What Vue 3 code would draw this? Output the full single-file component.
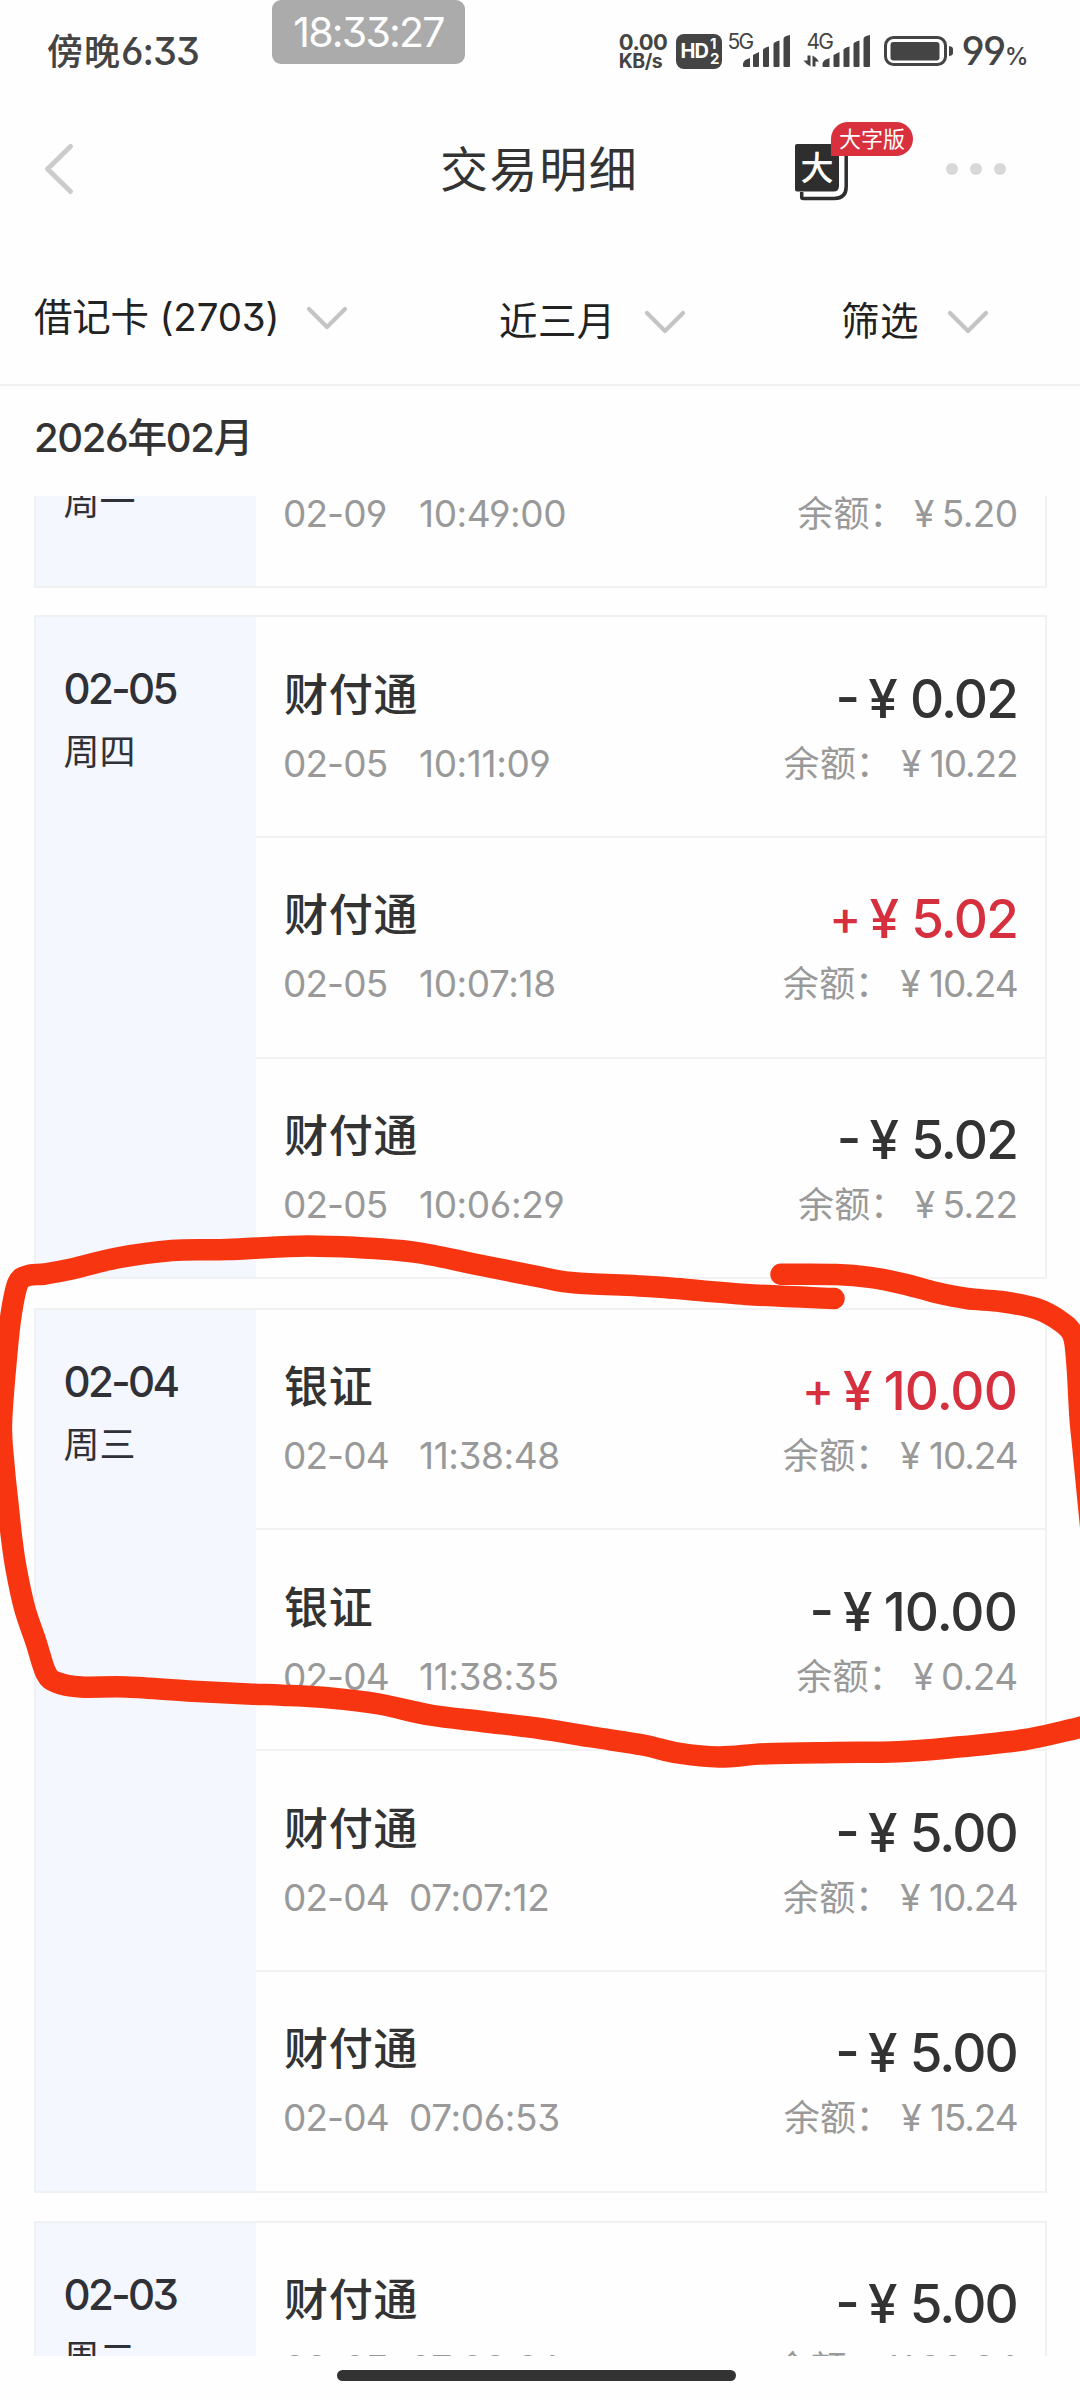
<script setup>
// The first card is scrolled so that only its last text line is on screen.
const cards = [
  {
    id: 'c0209',
    week: '周一',
    rows: [{ day: '02-09', time: '10:49:00', balance: '5.20' }],
  },
  {
    id: 'c0205',
    date: '02-05',
    week: '周四',
    rows: [
      { name: '财付通', day: '02-05', time: '10:11:09', sign: '-', amount: '0.02', balance: '10.22' },
      { name: '财付通', day: '02-05', time: '10:07:18', sign: '+', amount: '5.02', balance: '10.24' },
      { name: '财付通', day: '02-05', time: '10:06:29', sign: '-', amount: '5.02', balance: '5.22' },
    ],
  },
  {
    id: 'c0204',
    date: '02-04',
    week: '周三',
    rows: [
      { name: '银证', day: '02-04', time: '11:38:48', sign: '+', amount: '10.00', balance: '10.24' },
      { name: '银证', day: '02-04', time: '11:38:35', sign: '-', amount: '10.00', balance: '0.24' },
      { name: '财付通', day: '02-04', time: '07:07:12', sign: '-', amount: '5.00', balance: '10.24' },
      { name: '财付通', day: '02-04', time: '07:06:53', sign: '-', amount: '5.00', balance: '15.24' },
    ],
  },
  {
    id: 'c0203',
    date: '02-03',
    week: '周二',
    rows: [{ name: '财付通', day: '02-03', time: '07:08:26', sign: '-', amount: '5.00', balance: '20.24' }],
  },
]

const filters = [
  { label: '借记卡 (2703)', cls: 'account' },
  { label: '近三月', cls: 'period' },
  { label: '筛选', cls: 'more' },
]

const markerLeft = [
  [834, 1298.6], [746, 1294.4], [657, 1287], [574, 1282.8], [540, 1277], [482, 1265.5], [420, 1253],
  [375, 1248.5], [330, 1246.4], [289, 1246.4], [227, 1249.6], [172, 1250.5], [117, 1258], [69, 1269.6],
  [45, 1274], [28, 1275.6], [18, 1283], [11.5, 1312], [7, 1351], [1.5, 1423], [4, 1466], [8, 1505],
  [11.5, 1537], [16, 1568], [24.6, 1608], [36, 1642], [46, 1673], [57, 1682.5], [81, 1687], [127, 1687],
  [193, 1691.2], [248, 1694], [282, 1695.2], [330, 1698], [379, 1704], [430, 1715], [482, 1721.5],
  [540, 1728.5], [592, 1737], [643, 1745], [678, 1753], [719, 1757], [767, 1753.7], [836, 1752.5],
  [898, 1751.8], [953, 1747.5], [1022, 1740], [1067, 1730.5], [1100, 1722],
]
const markerRight = [
  [781, 1274.3], [836, 1274.5], [870, 1277.4], [905, 1284.2], [936, 1292.5], [967, 1298.5], [1001, 1301.5],
  [1036, 1308.5], [1060, 1321], [1073, 1335], [1077, 1364], [1080, 1417], [1083, 1448], [1091, 1530],
]

function smooth(p) {
  let d = `M${p[0]}`
  for (let i = 0; i < p.length - 1; i++) {
    const a = p[i - 1] || p[i]
    const b = p[i]
    const c = p[i + 1]
    const e = p[i + 2] || c
    d += `C${b[0] + (c[0] - a[0]) / 6},${b[1] + (c[1] - a[1]) / 6} ${c[0] - (e[0] - b[0]) / 6},${c[1] - (e[1] - b[1]) / 6} ${c[0]},${c[1]}`
  }
  return d
}
</script>

<template>
  <div class="screen">
    <header class="status">
      <span class="clock"><span class="clock-cn">傍晚</span>6:33</span>
      <div class="indicators">
        <div class="speed"><span class="rate">0.00</span><span class="unit">KB/s</span></div>
        <div class="hd">
          <span>HD</span>
          <span class="sims"><i>1</i><i>2</i></span>
        </div>
        <div class="signal first">
          <span class="net">5G</span>
          <svg width="64" height="36" viewBox="0 0 64 36">
            <g fill="#444">
              <path d="M16 33v-2q0-4 7-6v9h-6q-1 0-1-1z" />
              <path d="M26 22l6-3v14q0 1-1 1h-4q-1 0-1-1z" />
              <path d="M36 17q0-2 6-3.500v19.500q0 1-1 1h-4q-1 0-1-1z" />
              <path d="M46.500 11q0-2 6-3.500v25.500q0 1-1 1h-4q-1 0-1-1z" />
              <path d="M56.500 6q0-3 6.500-4v31q0 1-1 1h-4.500q-1 0-1-1z" />
            </g>
          </svg>
        </div>
        <div class="signal second">
          <span class="net">4G</span>
          <svg width="67" height="36" viewBox="0 0 67 36">
            <g fill="#444">
              <path d="M4.500 22.500h3v11q-4-2-7-6h4z" />
              <path d="M9.500 22.500q4 2 6.500 6h-3.500v5h-3z" />
              <path d="M19.500 33v-2q0-4 7-6v9h-6q-1 0-1-1z" />
              <path d="M30.500 22l6-3v14q0 1-1 1h-4q-1 0-1-1z" />
              <path d="M40.500 17q0-2 6-3.500v19.500q0 1-1 1h-4q-1 0-1-1z" />
              <path d="M50.500 11q0-2 6-3.500v25.500q0 1-1 1h-4q-1 0-1-1z" />
              <path d="M60.500 6q0-3 6.500-4v31q0 1-1 1h-4.500q-1 0-1-1z" />
            </g>
          </svg>
        </div>
        <svg class="battery" width="70" height="32" viewBox="0 0 70 32">
          <rect x="1.500" y="2.500" width="60" height="27" rx="8" fill="none" stroke="#444" stroke-width="3" />
          <rect x="6.500" y="7" width="49" height="18.500" rx="3" fill="#444" />
          <path d="M65 11q4 .5 4 3v4q0 2.500-4 3z" fill="#444" />
        </svg>
        <span class="percent">99<small>%</small></span>
      </div>
      <div class="stamp">18:33:27</div>
    </header>

    <nav class="titlebar">
      <svg class="back" width="32" height="56" viewBox="0 0 32 56">
        <path d="M27.500 5.500L4.500 28l23 22.500" fill="none" stroke="#ccc" stroke-width="5" stroke-linecap="round" stroke-linejoin="round" />
      </svg>
      <h1>交易明细</h1>
      <div class="bigtext">
        <svg width="54" height="58" viewBox="0 0 54 58">
          <path d="M6.700 49v5.200q0 1.300 1.500 1.300h31q12 0 12-12V10" fill="none" stroke="#2e2e2e" stroke-width="3.500" />
          <path d="M2 1h42v42q0 5.500-5.500 5.500H2q-2 0-2-2V3q0-2 2-2z" fill="#2e2e2e" />
        </svg>
        <span class="glyph">大</span>
        <span class="tag">大字版</span>
      </div>
      <div class="dots"><i></i><i></i><i></i></div>
    </nav>

    <section class="filters">
      <div v-for="f in filters" :key="f.cls" class="filter" :class="f.cls">
        <span>{{ f.label }}</span>
        <svg width="42" height="26" viewBox="0 0 42 26">
          <path d="M3 3l18 18L39 3" fill="none" stroke="#c4c4c4" stroke-width="4.200" stroke-linecap="round" stroke-linejoin="round" />
        </svg>
      </div>
    </section>

    <h2 class="month">2026年02月</h2>

    <main class="list">
      <article v-for="c in cards" :key="c.id" class="card">
        <aside>
          <div class="date">{{ c.date }}</div>
          <div class="week">{{ c.week }}</div>
        </aside>
        <ul>
          <li v-for="r in c.rows" :key="r.time">
            <div>
              <div class="name">{{ r.name }}</div>
              <div class="when" :class="{ one: r.time[0] === '1' }">
                <span class="day">{{ r.day }}</span><span>{{ r.time }}</span>
              </div>
            </div>
            <div class="money">
              <div class="amount" :class="{ income: r.sign === '+', one: r.amount && r.amount[0] === '1' }">
                <template v-if="r.amount">
                  <span class="sign">{{ r.sign }}</span><span class="yen">¥</span><span>{{ r.amount }}</span>
                </template>
              </div>
              <div class="balance" :class="{ one: r.balance[0] === '1' }">
                <span class="label">余额<span class="colon">：</span></span><span class="yen">¥</span><span>{{ r.balance }}</span>
              </div>
            </div>
          </li>
        </ul>
      </article>
    </main>

    <footer class="home"><i></i></footer>

    <svg class="marker" width="1080" height="2400" viewBox="0 0 1080 2400">
      <g fill="none" stroke="#f73510" stroke-width="21.500" stroke-linecap="round" stroke-linejoin="round">
        <path :d="smooth(markerLeft)" />
        <path :d="smooth(markerRight)" />
      </g>
    </svg>
  </div>
</template>

<style>
html,
body {
  margin: 0;
  background: #fefefe;
}
</style>

<style scoped>
.screen {
  position: relative;
  display: flex;
  flex-direction: column;
  width: 1080px;
  height: 2400px;
  overflow: hidden;
  background: #fefefe;
  color: #333;
  font-family: Inter, 'Noto Sans CJK SC', sans-serif;
  font-feature-settings: 'cv03', 'cv04', 'cv09', 'calt' 0;
  white-space: nowrap;
}
h1,
h2,
ul {
  margin: 0;
  padding: 0;
  font-weight: 400;
}
i {
  font-style: normal;
}
svg {
  display: block;
}

.status {
  position: relative;
  display: flex;
  align-items: center;
  justify-content: space-between;
  height: 102px;
  box-sizing: border-box;
  padding: 0 53px 0 47px;
  color: #444;
}
.clock {
  font-size: 38px;
  line-height: 60px;
  font-weight: 500;
  letter-spacing: -1px;
}
.clock-cn {
  font-size: 36px;
  letter-spacing: 1px;
}
.stamp {
  position: absolute;
  left: 272px;
  top: 0;
  width: 193px;
  height: 64px;
  border-radius: 9px;
  background: #ababab;
  color: #fff;
  font-size: 41px;
  line-height: 65px;
  letter-spacing: -1.8px;
  text-align: center;
}
.indicators {
  display: flex;
  align-items: center;
}
.speed {
  display: flex;
  flex-direction: column;
  align-items: flex-start;
  font-weight: 700;
}
.rate {
  font-size: 22px;
  line-height: 20px;
  letter-spacing: -0.5px;
}
.unit {
  font-size: 19.5px;
  line-height: 19px;
  letter-spacing: -0.5px;
}
.hd {
  display: flex;
  align-items: center;
  justify-content: center;
  width: 46px;
  height: 35px;
  margin-left: 9px;
  border-radius: 8px;
  background: #444;
  color: #fff;
  font-size: 20px;
  font-weight: 700;
  letter-spacing: -1px;
}
.sims {
  display: flex;
  flex-direction: column;
  margin-left: 2px;
  font-size: 15px;
  line-height: 15px;
}
.signal {
  position: relative;
}
.first {
  margin-left: 5px;
}
.second {
  margin-left: 12px;
}
.net {
  position: absolute;
  left: 0;
  top: -1px;
  font-size: 21px;
  line-height: 20px;
  letter-spacing: -1.6px;
}
.second .net {
  left: 3px;
}
.battery {
  margin-left: 14px;
}
.percent {
  margin-left: 7px;
  font-size: 39px;
  line-height: 60px;
  font-weight: 500;
  letter-spacing: -1.5px;
}
.percent small {
  font-size: 24px;
  line-height: 1;
}

.titlebar {
  display: flex;
  align-items: center;
  height: 134px;
}
.back {
  margin-left: 43px;
}
h1 {
  margin: 2px 0 0 365px;
  width: 200px;
  font-size: 48px;
  line-height: 60px;
  letter-spacing: 1.6px;
}
.bigtext {
  position: relative;
  margin: 6px 0 0 155px;
}
.glyph {
  position: absolute;
  left: 0;
  top: 0;
  width: 44px;
  color: #fff;
  font-size: 33px;
  line-height: 50px;
  text-align: center;
  font-weight: 500;
}
.tag {
  position: absolute;
  left: 36px;
  top: -21px;
  width: 82px;
  height: 34px;
  border-radius: 17px 17px 17px 0;
  background: #d9303e;
  color: #fff;
  font-size: 22px;
  line-height: 34px;
  text-align: center;
}
.dots {
  display: flex;
  gap: 12px;
  margin-left: 97px;
}
.dots i {
  width: 12px;
  height: 12px;
  border-radius: 50%;
  background: #d8d8d8;
}

.filters {
  display: flex;
  align-items: center;
  box-sizing: border-box;
  height: 150px;
  padding: 22px 0 0 34px;
  border-bottom: 2px solid #f0f0f0;
  color: #222;
}
.filter {
  display: flex;
  align-items: center;
  height: 50px;
  font-size: 38.5px;
  line-height: 50px;
}
.filter svg {
  margin: 4px 0 0 28px;
}
.account {
  width: 465px;
  margin-top: -8px;
}
.account span {
  width: 244px;
  letter-spacing: -0.2px;
}
.period {
  width: 342px;
}
.period span,
.more span {
  letter-spacing: 0.4px;
}

.month {
  height: 102px;
  padding: 0 0 8px 34px;
  font-size: 40px;
  line-height: 103px;
  font-weight: 500;
  letter-spacing: -1.4px;
}

.list {
  height: 1860px;
  overflow: hidden;
}
.card {
  display: flex;
  box-sizing: border-box;
  width: 1013px;
  margin: 0 0 28.250px 34px;
  border: 2px solid #f0f1f2;
  border-bottom: 0;
}
.card:first-child {
  margin-top: -131px;
  margin-bottom: 27.250px;
}
aside {
  width: 220px;
  box-sizing: border-box;
  padding: 47px 0 0 27.500px;
  border-bottom: 2px solid #f0f1f2;
  background: #f4f7fe;
  color: #303136;
}
.date {
  height: 50px;
  font-size: 42px;
  line-height: 50px;
  font-weight: 500;
  letter-spacing: -2.6px;
}
.week {
  margin-top: 16px;
  font-size: 36px;
  line-height: 44px;
}
ul {
  flex: 1;
  list-style: none;
}
li {
  display: flex;
  justify-content: space-between;
  box-sizing: border-box;
  height: 220.750px;
  padding: 0 30px 0 27px;
  border-bottom: 2px solid #f2f2f2;
}
.name {
  height: 60px;
  margin-top: 47.500px;
  padding-left: 1px;
  font-size: 44px;
  line-height: 60px;
  letter-spacing: 0.8px;
  font-weight: 500;
}
.when {
  display: flex;
  margin-top: 17px;
  color: #999;
  font-size: 37px;
  line-height: 44px;
  letter-spacing: -0.4px;
}
.day {
  width: 126px;
  letter-spacing: -0.9px;
}
.when.one .day {
  width: 136px;
}
.money {
  display: flex;
  flex-direction: column;
  align-items: flex-end;
}
.amount {
  display: flex;
  height: 60px;
  margin: 51.500px -2px 0 0;
  font-size: 53px;
  line-height: 60px;
  font-weight: 500;
  letter-spacing: -1.8px;
}
.amount.one {
  letter-spacing: -0.9px;
}
.amount.income {
  color: #d6303f;
}
.amount .sign {
  margin-right: 10px;
  line-height: 56px;
}
.amount.income .sign {
  margin-right: 10px;
  font-size: 48px;
  line-height: 58px;
}
.amount .yen {
  margin-right: 14px;
}
.amount.one .yen {
  margin-right: 12px;
}
.balance {
  display: flex;
  margin: 13px -2.500px 0 0;
  color: #999;
  font-size: 37px;
  line-height: 44px;
  letter-spacing: -0.6px;
}
.balance.one {
  letter-spacing: -1.1px;
}
.balance .label {
  font-size: 36px;
  letter-spacing: 0.3px;
}
.colon {
  margin: 0 1.500px 0 -0.500px;
}
.balance .yen {
  margin: 0 8px 0 7px;
}
.balance.one .yen {
  margin: 0 9.500px 0 7.500px;
}

.home {
  display: flex;
  justify-content: center;
  padding: 14px 7px 0 0;
}
.home i {
  width: 399px;
  height: 11px;
  border-radius: 6px;
  background: #333;
}

.marker {
  position: absolute;
  left: 0;
  top: 0;
}
</style>
